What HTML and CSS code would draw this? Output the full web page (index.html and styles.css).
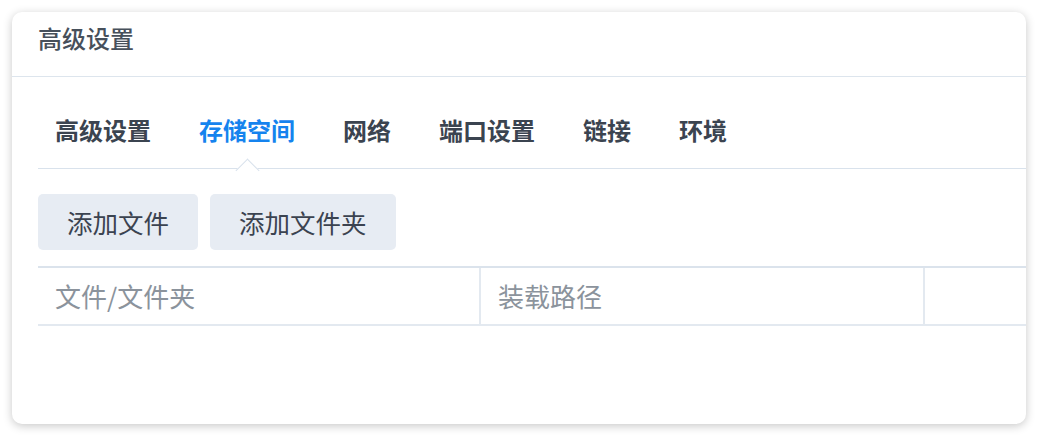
FILE: index.html
```html
<!DOCTYPE html>
<html lang="zh-CN">
<head>
<meta charset="utf-8">
<title>高级设置</title>
<link rel="stylesheet" href="styles.css">
</head>
<body>
<div class="card">
  <div class="card-header">高级设置</div>
  <div class="card-body">
    <div class="tabs">
      <div class="tab">高级设置</div>
      <div class="tab active">存储空间</div>
      <div class="tab">网络</div>
      <div class="tab">端口设置</div>
      <div class="tab">链接</div>
      <div class="tab">环境</div>
    </div>
    <div class="toolbar">
      <button class="btn">添加文件</button>
      <button class="btn">添加文件夹</button>
    </div>
    <div class="table">
      <div class="th first">文件/文件夹</div>
      <div class="th">装载路径</div>
      <div class="th last"></div>
    </div>
  </div>
</div>
</body>
</html>
```

FILE: styles.css
```css
html, body {
  margin: 0;
  padding: 0;
  background: #ffffff;
}
body {
  font-family: "Noto Sans CJK SC", "Noto Sans", sans-serif;
  padding: 12px;
}
.card {
  width: 1014px;
  height: 412px;
  background: #ffffff;
  border-radius: 10px;
  box-shadow: 0 2px 10px rgba(0, 0, 0, 0.22);
  overflow: hidden;
  box-sizing: border-box;
}
.card-header {
  height: 65px;
  box-sizing: border-box;
  border-bottom: 1px solid #dde5ed;
  padding: 12px 0 0 26px;
  font-size: 24px;
  line-height: 28px;
  font-weight: 500;
  color: #47505b;
}
.card-body {
  padding-left: 26px;
}
.tabs {
  display: flex;
  gap: 48px;
  padding-left: 17px;
  padding-top: 36px;
  height: 92px;
  box-sizing: border-box;
  border-bottom: 1px solid #d9e2ec;
}
.tab {
  position: relative;
  font-size: 24px;
  font-weight: 700;
  line-height: 34px;
  color: #3b4450;
  height: 34px;
}
.tab.active {
  color: #1583ee;
}
.tab.active::after {
  content: "";
  position: absolute;
  left: 50%;
  top: 49px;
  width: 16px;
  height: 16px;
  margin-left: -8px;
  background: #ffffff;
  border-left: 1px solid #d9e2ec;
  border-top: 1px solid #d9e2ec;
  transform: rotate(45deg);
}
.toolbar {
  display: flex;
  gap: 12px;
  padding-top: 25px;
}
.btn {
  font-family: inherit;
  font-size: 25.5px;
  color: #3b4350;
  background: #e7ecf3;
  border: none;
  border-radius: 5px;
  height: 56px;
  padding: 0 29px;
  line-height: 56px;
  cursor: pointer;
}
.table {
  margin-top: 16px;
  display: grid;
  grid-template-columns: 441px 444px 1fr;
  border-top: 2px solid #dbe3ec;
  border-bottom: 2px solid #e3e9f0;
  height: 60px;
  box-sizing: border-box;
}
.th {
  font-size: 26px;
  color: #8b939c;
  line-height: 56px;
  padding-left: 17px;
  border-left: 2px solid #e3e9f0;
}
.th.first {
  border-left: none;
}
```
